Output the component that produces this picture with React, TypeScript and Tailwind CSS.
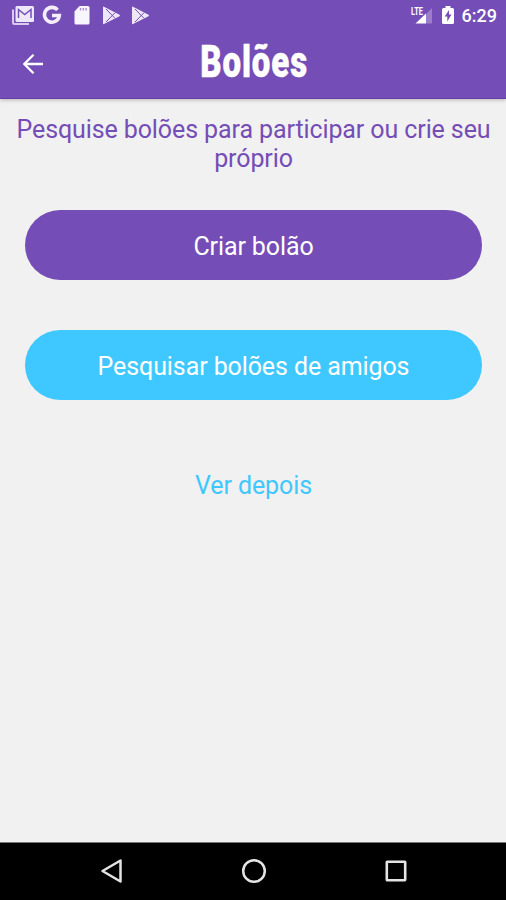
function MailIcon() {
  return (
    <svg width="24" height="22" viewBox="0 0 24 22" fill="none">
      <path d="M2 5.500V18.500Q2 20 3.500 20H18" stroke="#d9cbed" strokeWidth="2" />
      <rect x="4.500" y="2" width="18.500" height="16" rx="1.500" fill="#eee7f7" />
      <path d="M7.500 14V5.500L13.750 10.500L20 5.500V14" stroke="#754db6" strokeWidth="1.500" />
    </svg>
  );
}

function GoogleIcon() {
  return (
    <svg width="20" height="20" viewBox="0 0 20 20" fill="none">
      <path d="M15.500 4.900A7.400 7.400 0 1 0 17.300 10.500H10" stroke="#f3eefa" strokeWidth="3.600" />
    </svg>
  );
}

function SdIcon() {
  return (
    <svg width="16" height="20" viewBox="0 0 16 20">
      <path fill="#f8f5fc" d="M5.500 1H14Q15.500 1 15.500 2.500V18Q15.500 19.500 14 19.500H2Q.500 19.500 .500 18V6.500Z" />
      <path d="M6.500 3V5.500M9.300 3V5.500M12.100 3V5.500" stroke="#a58bd0" strokeWidth="1.300" />
    </svg>
  );
}

function PlayIcon() {
  return (
    <svg width="19" height="20" viewBox="0 0 19 20">
      <path fill="#eee7f7" d="M1 2.200Q1 1.300 2 1.800L17.500 9.800Q18.500 10.500 17.500 11.200L2 19Q1 19.400 1 18.600Z" />
      <path d="M4 4L13 13.300M4 17L13 7.700" stroke="#754db6" strokeWidth="1" fill="none" />
    </svg>
  );
}

function StatusBar() {
  return (
    <div className="flex h-[30px] items-center justify-between pl-[11px] pr-[9px]">
      <div className="flex items-center">
        <MailIcon />
        <div className="ml-[7px]"><GoogleIcon /></div>
        <div className="ml-[12px]"><SdIcon /></div>
        <div className="ml-[12px]"><PlayIcon /></div>
        <div className="ml-[10px]"><PlayIcon /></div>
      </div>
      <div className="flex items-center">
        <svg width="23" height="20" viewBox="0 0 23 20">
          <path fill="#9b7dcb" d="M16 9L22 3V18.500H16Z" />
          <path fill="#fff" d="M5.500 18.500L16 8.500V18.500Z" />
          <text x="1" y="10" fill="#fff" fontFamily="Roboto, sans-serif" fontWeight="700" fontSize="10.500" textLength="12" lengthAdjust="spacingAndGlyphs">LTE</text>
        </svg>
        <svg className="ml-[9px]" width="12" height="20" viewBox="0 0 12 20">
          <path fill="#fff" d="M3.500 1H8.500V3H10.500Q12 3 12 4.500V17.500Q12 19 10.500 19H1.500Q0 19 0 17.500V4.500Q0 3 1.500 3H3.500Z" />
          <path fill="#754db6" d="M7 5L2.700 11.500H5.300V16.500L9.500 9.500H7Z" />
        </svg>
        <span className="ml-[8px] pt-[2px] text-[18px] font-medium leading-[30px] text-white">6:29</span>
      </div>
    </div>
  );
}

export default function App() {
  return (
    <div className="flex h-[900px] w-[506px] flex-col overflow-hidden bg-[#f1f1f1] font-[Roboto,sans-serif]">
      <header className="h-[99px] shrink-0 border-b border-[#673ea8] bg-[#754db6] shadow-[0_1px_4px_rgba(0,0,0,0.25)]">
        <StatusBar />
        <div className="grid h-[68px] grid-cols-[80px_1fr_80px] items-center">
          <svg className="ml-[22px]" width="22" height="22" viewBox="0 0 22 22" fill="none" stroke="#fff" strokeWidth="2.300">
            <path d="M21 11H2.500M11.500 1.800L2.300 11L11.500 20.200" />
          </svg>
          <h1 className="origin-center scale-x-[0.75] pb-[5px] pl-[3px] text-center text-[44px] font-black leading-[60px] tracking-[1.2px] text-white [-webkit-text-stroke:0.5px_white]">Bolões</h1>
        </div>
      </header>
      <main className="flex flex-1 flex-col items-center pl-px pt-[16px] text-[25px] tracking-[-0.1px]">
        <p className="w-[500px] text-center leading-[29px] text-[#754db6]">
          Pesquise bolões para participar ou crie seu
          <br />
          próprio
        </p>
        <button className="mt-[37px] h-[70px] w-[457px] rounded-full bg-[#754db6] pt-[3px] text-white">Criar bolão</button>
        <button className="mt-[50px] h-[70px] w-[457px] rounded-full bg-[#3fc8ff] pt-[3px] text-white">Pesquisar bolões de amigos</button>
        <button className="mt-[50px] h-[70px] w-[457px] pt-[2px] text-[#3fc8ff]">Ver depois</button>
      </main>
      <nav className="h-[58px] shrink-0 border-t border-[#777] bg-black">
        <div className="flex h-[56px] items-center justify-between pl-[100px] pr-[99px]">
          <svg width="23" height="26" viewBox="0 0 23 26" fill="none" stroke="#e4e4e4" strokeWidth="2.500" strokeLinejoin="round">
            <path d="M20.500 2.500V23.500L2.500 13Z" />
          </svg>
          <svg width="26" height="26" viewBox="0 0 26 26" fill="none" stroke="#e4e4e4" strokeWidth="2.500">
            <circle cx="13" cy="13" r="10.800" />
          </svg>
          <svg width="22" height="22" viewBox="0 0 22 22" fill="none" stroke="#e4e4e4" strokeWidth="2.600">
            <rect x="1.800" y="1.800" width="18.400" height="18.400" rx=".500" />
          </svg>
        </div>
      </nav>
    </div>
  );
}
